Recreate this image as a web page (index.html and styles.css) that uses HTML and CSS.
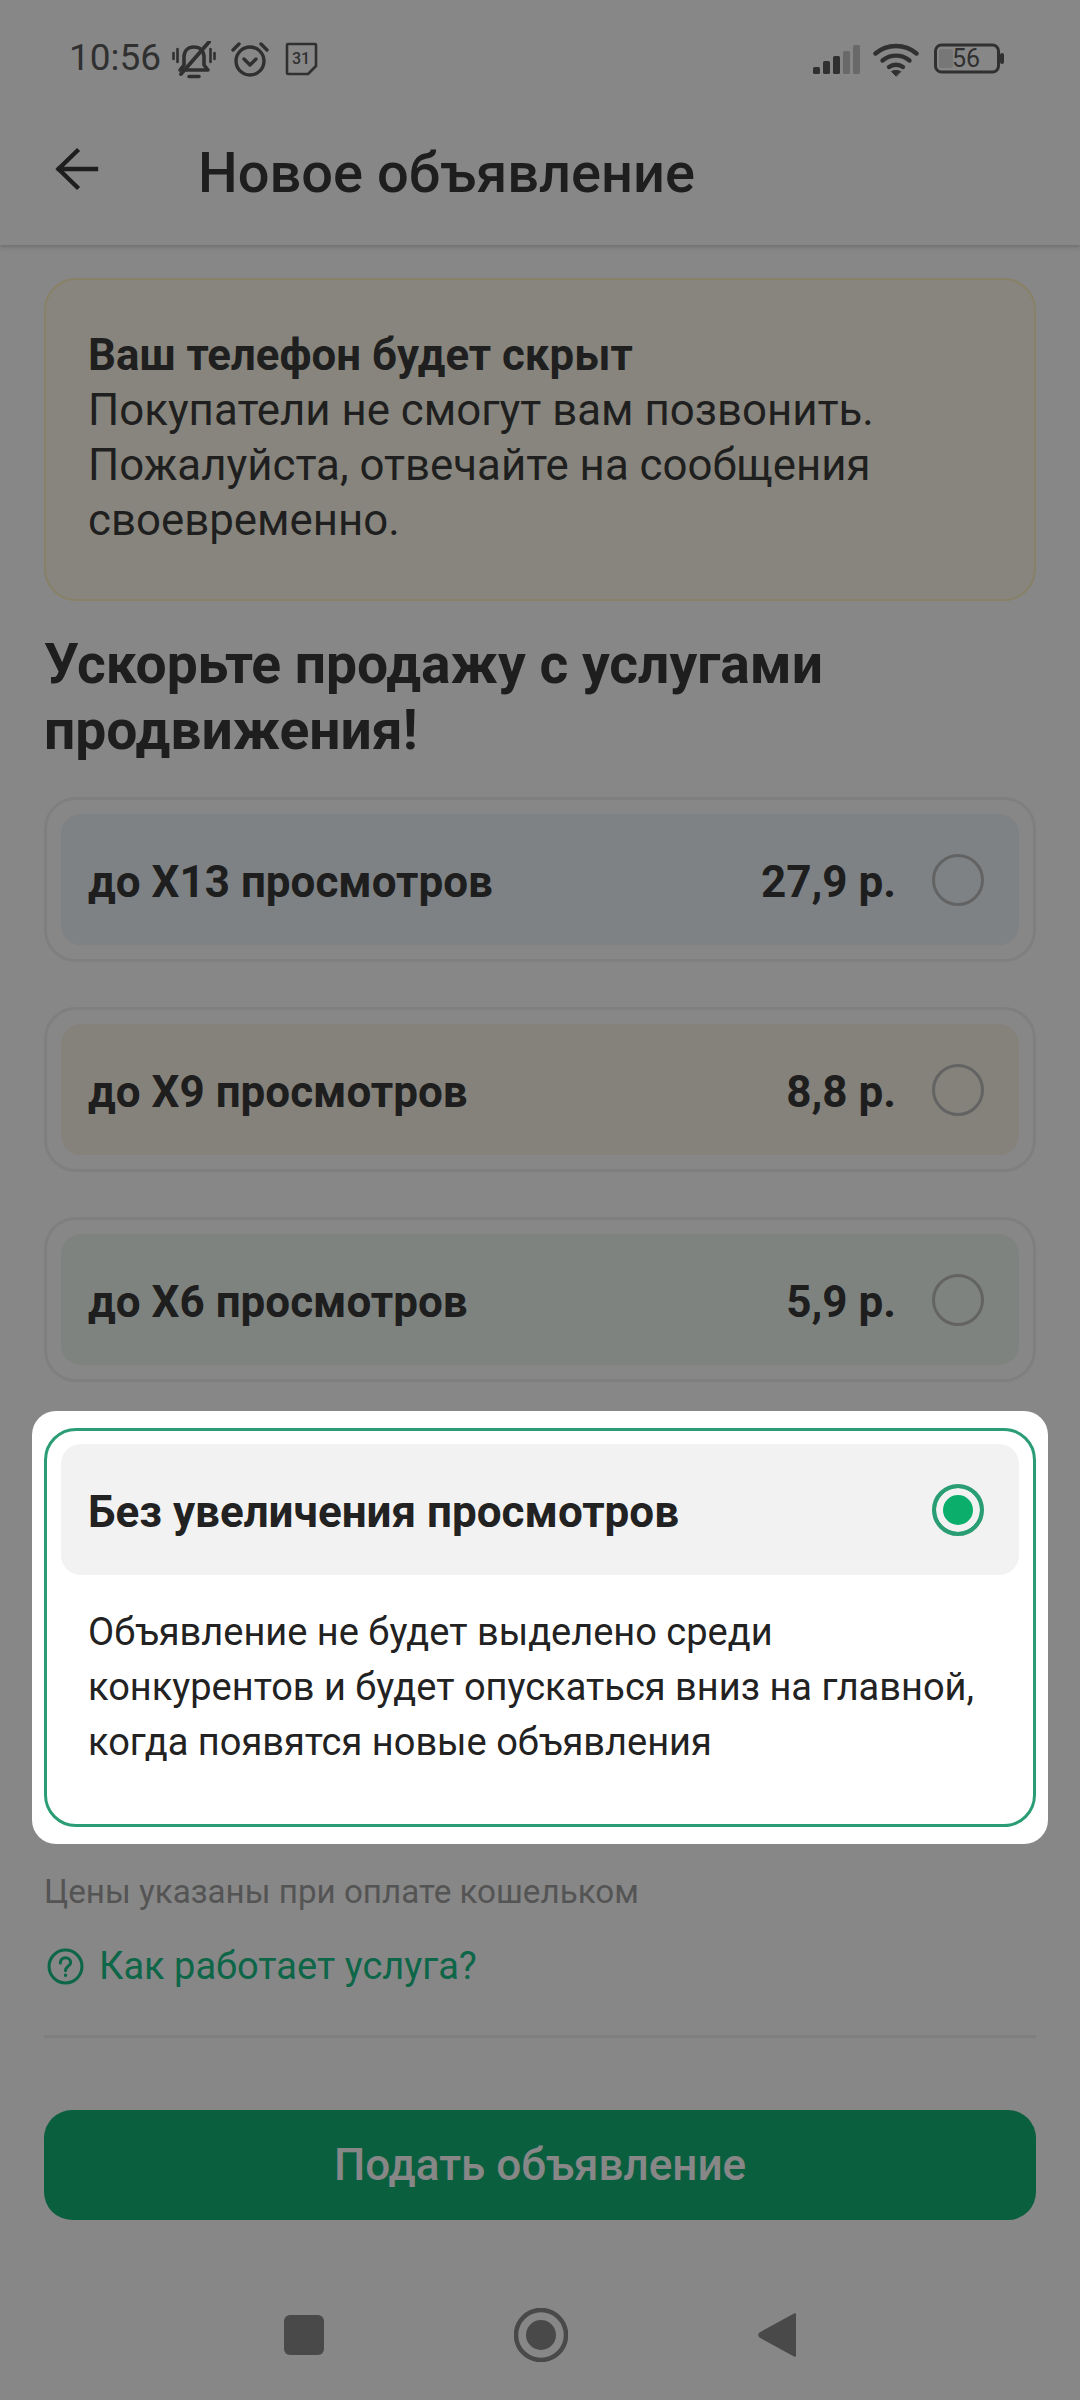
FILE: index.html
```html
<!DOCTYPE html>
<html lang="ru">
<head>
<meta charset="utf-8">
<title>Новое объявление</title>
<link rel="stylesheet" href="styles.css">
</head>
<body>
<div class="screen">
  <div class="scrim"></div>
  <header class="top">
    <div class="status">
      <div class="status-left">
        <span class="time">10:56</span>
        <svg class="ic-bell" viewBox="0 0 44 38" fill="none" stroke="#5c5c5c" stroke-width="3.600" stroke-linecap="round" stroke-linejoin="round">
          <path d="M8 29h28l-4-5v-8c0-6-4-10-10-10s-10 4-10 10v8z"/>
          <path d="M17 35.500h10" stroke-width="3.500"/>
          <path d="M9 33 37 1" stroke-width="3.800"/>
          <path d="M1.500 12v6M5.500 8v13M38.500 8v13M42.500 12v6" stroke-width="2.600"/>
        </svg>
        <svg class="ic-alarm" viewBox="0 0 40 36" fill="none" stroke="#5c5c5c" stroke-width="3.400" stroke-linecap="round" stroke-linejoin="round">
          <circle cx="20" cy="20" r="14"/>
          <path d="m14 18 6 6 6-6"/>
          <path d="M3 9 9 3M37 9l-6-6"/>
        </svg>
        <svg class="ic-cal" viewBox="0 0 33 34" fill="none">
          <path d="M2 3a1 1 0 0 1 1-1h27a1 1 0 0 1 1 1v21l-8 8H3a1 1 0 0 1-1-1z" stroke="#5c5c5c" stroke-width="2.600" stroke-linejoin="round"/>
          <text x="16" y="22" text-anchor="middle" class="cal-num">31</text>
        </svg>
      </div>
      <div class="status-right">
        <svg class="ic-signal" viewBox="0 0 48 30">
          <rect x="1" y="22" width="7" height="7" rx="1.500" fill="#5c5c5c"/>
          <rect x="11" y="16" width="7" height="13" rx="1.500" fill="#5c5c5c"/>
          <rect x="21" y="11" width="7" height="18" rx="1.500" fill="#5c5c5c"/>
          <rect x="31" y="6" width="7" height="23" rx="1.500" fill="#c6c6c6"/>
          <rect x="41" y="0" width="7" height="29" rx="1.500" fill="#c6c6c6"/>
        </svg>
        <svg class="ic-wifi" viewBox="0 0 46 34" fill="none" stroke="#5c5c5c" stroke-width="4.400" stroke-linecap="round">
          <path d="M2.500 10.500C14 .5 32 .5 43.500 10.500"/>
          <path d="M9.500 17.500c8-6.500 19-6.500 27 0"/>
          <path d="M16 24c4-3 10-3 14 0"/>
          <path d="m23 33-4.500-4.500c2.500-1.500 6.500-1.500 9 0z" fill="#5c5c5c" stroke-width="1"/>
        </svg>
        <svg class="ic-batt" viewBox="0 0 70 32">
          <rect x="1.500" y="2" width="63" height="27" rx="6" fill="none" stroke="#5c5c5c" stroke-width="3"/>
          <rect x="5" y="6" width="14" height="19" rx="2" fill="#e0e0e0"/>
          <rect x="66" y="10" width="4" height="11" rx="2" fill="#5c5c5c"/>
          <text x="32" y="24" text-anchor="middle" class="batt-num">56</text>
        </svg>
      </div>
    </div>
    <div class="appbar">
      <svg class="ic-back" viewBox="0 0 44 44" fill="none" stroke="#3a3a3a" stroke-width="4.400" stroke-linecap="square" stroke-linejoin="miter">
        <path d="M41 22H4M22 4 3.500 22 22 40"/>
      </svg>
      <h1 class="title">Новое объявление</h1>
    </div>
  </header>

  <main class="content">
    <section class="notice">
      <p class="notice-text"><b>Ваш телефон будет скрыт</b><br>Покупатели не смогут вам позвонить.<br>Пожалуйста, отвечайте на сообщения<br>своевременно.</p>
    </section>

    <h2 class="heading">Ускорьте продажу с услугами продвижения!</h2>

    <div class="options">
      <div class="option">
        <div class="option-row row-blue"><span class="option-name">до Х13 просмотров</span><span class="option-price">27,9 р.</span><span class="radio"></span></div>
      </div>
      <div class="option">
        <div class="option-row row-sand"><span class="option-name">до Х9 просмотров</span><span class="option-price">8,8 р.</span><span class="radio"></span></div>
      </div>
      <div class="option">
        <div class="option-row row-green"><span class="option-name">до Х6 просмотров</span><span class="option-price">5,9 р.</span><span class="radio"></span></div>
      </div>
      <div class="focus">
        <div class="option option-on">
          <div class="option-row row-grey"><span class="option-name">Без увеличения просмотров</span><span class="radio radio-on"></span></div>
          <p class="option-desc">Объявление не будет выделено среди конкурентов и будет опускаться вниз на главной, когда появятся новые объявления</p>
        </div>
      </div>
    </div>

    <p class="hint">Цены указаны при оплате кошельком</p>
    <a class="how">
      <svg class="ic-help" viewBox="0 0 36 36" fill="none" stroke="#19c088" stroke-width="3">
        <circle cx="18" cy="18" r="16"/>
        <path d="M13 14.500c0-3 2.200-5 5-5s5 2 5 4.500c0 3.500-5 4-5 8" stroke-linecap="round"/>
        <circle cx="18" cy="26.500" r="1.200" fill="#19c088" stroke-width="1"/>
      </svg>
      <span>Как работает услуга?</span>
    </a>
    <hr class="divider">
    <button class="submit">Подать объявление</button>
  </main>

  <nav class="navbar">
    <svg class="nav-square" viewBox="0 0 40 40"><rect width="40" height="40" rx="6" fill="#8a8a8a"/></svg>
    <svg class="nav-circle" viewBox="0 0 54 54"><circle cx="27" cy="27" r="25" fill="none" stroke="#8a8a8a" stroke-width="4.500"/><circle cx="27" cy="27" r="15" fill="#8a8a8a"/></svg>
    <svg class="nav-back" viewBox="0 0 38 46"><path d="M36 1.500a1.200 1.200 0 0 1 2 1v41a1.200 1.200 0 0 1-2 1L1.500 25.500a3.500 3.500 0 0 1 0-5z" fill="#8a8a8a"/></svg>
  </nav>
</div>
</body>
</html>
```

FILE: styles.css
```css
* { box-sizing: border-box; }
html, body { margin: 0; padding: 0; }
body { font-family: Roboto, "Noto Sans", sans-serif; background: #fff; color: #222; }
.screen { position: relative; width: 1080px; height: 2400px; overflow: hidden; background: #fff; }
.scrim { position: absolute; inset: 0; background: rgba(0, 0, 0, .47); z-index: 1; }

.top { height: 245px; background: #fff; box-shadow: 0 2px 5px rgba(0, 0, 0, .2); }
.status { height: 118px; display: flex; justify-content: space-between; padding: 38px 76px 0 69px; }
.status-left { display: flex; align-items: flex-start; }
.time { font-size: 37px; line-height: 42px; color: #5c5c5c; width: 103px; margin-top: -1px; }
.ic-bell { width: 44px; height: 38px; margin-top: 3px; }
.ic-alarm { width: 40px; height: 36px; margin: 3px 0 0 14px; }
.ic-cal { width: 33px; height: 34px; margin: 4px 0 0 15px; }
.cal-num { font-size: 16px; font-weight: 500; fill: #5c5c5c; font-family: Roboto, sans-serif; }
.status-right { display: flex; align-items: flex-start; }
.ic-signal { width: 48px; height: 30px; margin-top: 7px; }
.ic-wifi { width: 46px; height: 34px; margin: 5px 0 0 13px; }
.ic-batt { width: 70px; height: 32px; margin: 5px 0 0 15px; }
.batt-num { font-size: 25px; fill: #5c5c5c; font-family: Roboto, sans-serif; }

.appbar { height: 127px; display: flex; align-items: flex-start; padding: 29px 0 0 55px; }
.ic-back { width: 44px; height: 44px; flex: none; }
.title { margin: -4px 0 0 99px; font-size: 56px; line-height: 60px; font-weight: 500; color: #3a3a3a; white-space: nowrap; }

.content { padding: 33px 44px 0; }
.notice { height: 323px; background: #fffcec; border: 2px solid #fff3c4; border-radius: 32px; padding: 48px 42px 0; }
.notice-text { margin: 0; font-size: 43.800px; line-height: 55px; color: #3c3c3c; }
.notice-text b { font-weight: 700; }

.heading { margin: 30px 0 34px; font-size: 55.200px; line-height: 66px; font-weight: 700; color: #3a3a3a; width: 900px; }

.options { display: flex; flex-direction: column; gap: 45px; }
.option { height: 165px; border: 3px solid #f0f0f0; border-radius: 32px; padding: 14px; background: #fff; }
.option-row { height: 131px; border-radius: 20px; display: flex; align-items: center; padding: 0 35px 0 27px; }
.row-blue { background: #eef5fb; }
.row-sand { background: #fbf6ea; }
.row-green { background: #eef8f2; }
.row-grey { background: #f2f2f2; }
.option-name { font-size: 44px; font-weight: 700; flex: 1; color: #3a3a3a; margin-top: 4px; }
.option-price { font-size: 44px; font-weight: 700; color: #3a3a3a; margin: 4px 36px 0 0; }
.radio { width: 52px; height: 52px; border-radius: 50%; border: 3px solid #bcbcbc; flex: none; }

.focus { position: relative; z-index: 2; background: #fff; border-radius: 24px; padding: 17px 12px; margin: -16px -12px 0; }
.option-on { height: 399px; border: 3px solid #2a9d74; padding-top: 13px; }
.option-on .option-name { color: #222; margin-top: 4px; }
.radio-on { border: 4px solid #2a9d74; background: #0bae6a; box-shadow: inset 0 0 0 7px #f2f2f2; }
.option-desc { margin: 30px 36px 0 27px; font-size: 38px; line-height: 55px; color: #222; }

.hint { margin: 26px 0 0; font-size: 33.200px; line-height: 44px; color: #9f9f9f; }
.how { display: flex; align-items: center; margin-top: 30px; height: 44px; font-size: 38px; color: #19c088; padding-left: 3px; }
.ic-help { width: 37px; height: 37px; margin-right: 15px; flex: none; }
.divider { margin: 47px 0 0; border: 0; height: 3px; background: #f0f0f0; }
.submit { display: block; width: 100%; height: 110px; margin-top: 72px; border: 0; border-radius: 28px; background: #13b478; color: #fff; font: 500 44px Roboto, sans-serif; }

.navbar { position: absolute; left: 0; right: 0; bottom: 40px; display: flex; justify-content: center; align-items: center; height: 50px; }
.nav-square { width: 40px; height: 40px; flex: none; }
.nav-circle { width: 54px; height: 54px; flex: none; margin: 0 190px; }
.nav-back { width: 38px; height: 46px; flex: none; }
```
